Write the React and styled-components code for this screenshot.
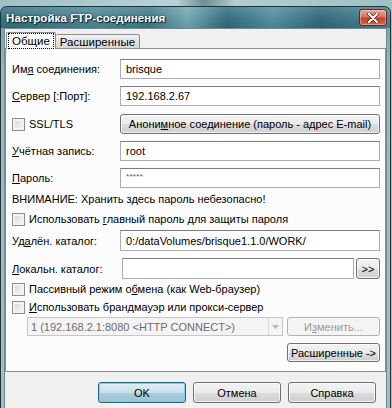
import React from 'react';
import styled, { createGlobalStyle } from 'styled-components';

const GlobalStyle = createGlobalStyle`
  html, body {
    margin: 0;
    padding: 0;
    background: #9fc0c5;
  }
  body {
    font-family: "Liberation Sans", Arial, sans-serif;
    font-size: 11px;
    color: #000;
  }
`

const Desktop = styled.div`
  width: 392px;
  height: 408px;
  padding-top: 6px;
  box-sizing: border-box;
  background: linear-gradient(90deg, #9fc0c5 0%, #b8d2d5 45%, #6d8f95 52%, #b3cdd0 60%, #9fc0c5 100%);
  overflow: hidden;
`

const Window = styled.div`
  width: 391px;
  box-sizing: border-box;
  border: 1px solid #1f3339;
  border-bottom: none;
  border-radius: 7px 7px 0 0;
  padding: 0 3px 3px;
  background: linear-gradient(180deg, #3d7b89 0px, #7fa4ac 22px, #9bb8be 60px, #a4bfc4 100%);
`

const TitleBar = styled.div`
  height: 21px;
  display: flex;
  align-items: center;
  justify-content: space-between;
  margin: 0 -3px;
  padding-left: 5px;
  padding-right: 3px;
  border-radius: 6px 6px 0 0;
  background:
    linear-gradient(180deg, rgba(255,255,255,0.18) 0%, rgba(255,255,255,0.05) 50%, rgba(0,0,0,0.05) 100%),
    linear-gradient(90deg, #2f6d7d 0%, #4a8594 25%, #3c7685 38%, #6ea3af 48%, #2d6878 58%, #4f8b99 70%, #2b6676 82%, #4a8391 100%);
`

const Title = styled.span`
  color: #fff;
  font-weight: bold;
  font-size: 11.5px;
  letter-spacing: 0.1px;
  text-shadow: 0 0 2px #0d2026, 1px 1px 1px #0d2026;
`

const CloseButton = styled.div`
  width: 26px;
  height: 15px;
  border: 1px solid #5a2a24;
  border-radius: 3px;
  display: flex;
  align-items: center;
  justify-content: center;
  background: linear-gradient(180deg, #e9a99b 0%, #d8715e 45%, #c0412b 55%, #d36a4d 100%);
  box-shadow: inset 0 0 0 1px rgba(255,255,255,0.35);
`

const Body = styled.div`
  background: #f0f0f0;
  border: 1px solid #6f8a90;
  padding: 3px 0 5px;
`

const TabRow = styled.div`
  display: flex;
  align-items: flex-end;
  padding-left: 1px;
  margin-bottom: -1px;
  position: relative;
  z-index: 1;
`

const Tab = styled.div`
  height: ${p => (p.$active ? '17px' : '15px')};
  box-sizing: border-box;
  padding: ${p => (p.$active ? '1px 2px 0' : '0 4px')};
  display: flex;
  align-items: ${p => (p.$active ? 'flex-start' : 'center')};
  border: 1px solid #898c95;
  border-bottom: ${p => (p.$active ? 'none' : '1px solid #898c95')};
  border-left: ${p => (p.$active ? '1px solid #898c95' : 'none')};
  background: ${p => (p.$active ? '#fcfcfc' : 'linear-gradient(180deg, #f2f2f2 0%, #e3e3e3 50%, #d5d5d5 100%)')};
  border-radius: 2px 2px 0 0;
  font-size: 11.5px;
`

const FocusText = styled.span`
  padding: 0 3px;
  line-height: 14px;
  outline: 1px dotted #000;
`

const Panel = styled.div`
  border: 1px solid #898c95;
  background: #fcfcfc;
  padding: 10px 5px 9px 6px;
  display: flex;
  flex-direction: column;
`

const Row = styled.div`
  display: flex;
  align-items: center;
  height: ${p => p.$h || 20}px;
  margin-top: ${p => p.$mt || 0}px;
  padding-left: ${p => p.$indent || 0}px;
  justify-content: ${p => (p.$end ? 'flex-end' : 'flex-start')};
  gap: ${p => p.$gap || 0}px;
`

const Label = styled.label`
  width: 108px;
  flex: none;
  display: flex;
  align-items: center;
  white-space: nowrap;
`

const Field = styled.div`
  flex: 1;
  height: 100%;
  box-sizing: border-box;
  border: 1px solid #abadb3;
  border-top-color: #7a7c82;
  background: #fff;
  padding: ${p => (p.$small ? '3px 5px 0' : '0 5px')};
  display: flex;
  align-items: ${p => (p.$small ? 'flex-start' : 'center')};
  white-space: nowrap;
  font-size: ${p => (p.$small ? '8px' : '11px')};
  color: ${p => (p.$small ? '#555' : '#000')};
  letter-spacing: ${p => (p.$small ? '0.3px' : '0')};
`

const Button = styled.div`
  height: 100%;
  box-sizing: border-box;
  width: ${p => (p.$w ? `${p.$w}px` : 'auto')};
  flex: ${p => (p.$grow ? 1 : 'none')};
  border: 1px solid ${p => (p.$disabled ? '#adb2b5' : '#707070')};
  border-radius: 3px;
  display: flex;
  align-items: center;
  justify-content: center;
  white-space: nowrap;
  color: ${p => (p.$disabled ? '#9a9a9a' : '#000')};
  background: ${p => (p.$disabled
    ? '#f4f4f4'
    : 'linear-gradient(180deg, #f2f2f2 0%, #ebebeb 50%, #dddddd 51%, #cfcfcf 100%)')};
  box-shadow: inset 0 0 0 1px ${p => (p.$disabled ? 'transparent' : 'rgba(255,255,255,0.7)')};
`

const DefaultButton = styled(Button)`
  border-color: #2c6279;
  background: linear-gradient(180deg, #e1eff5 0%, #c8e0ea 50%, #a9cddc 51%, #9cc4d5 100%);
  box-shadow: inset 0 0 0 1px #7fd0ef;
`

const Check = styled.span`
  width: 13px;
  height: 13px;
  box-sizing: border-box;
  flex: none;
  border: 1px solid #8f8f8f;
  background: linear-gradient(135deg, #d2d2d2 0%, #ececec 60%, #fafafa 100%);
  box-shadow: inset 0 0 0 2px #f4f4f4;
  margin-right: 4px;
`

const Warning = styled.div`
  height: 15px;
  display: flex;
  align-items: center;
  margin-top: 3px;
`

const Key = styled.u`
  text-decoration: underline;
  text-underline-offset: 1px;
`

const Select = styled.div`
  flex: 1;
  height: 100%;
  box-sizing: border-box;
  border: 1px solid #c4c6ca;
  background: #f4f4f4;
  display: flex;
  align-items: center;
  color: #6d6d6d;
  padding-left: 3px;
  margin-right: 4px;
`

const SelectText = styled.span`
  flex: 1;
  white-space: nowrap;
`

const DropArrow = styled.span`
  width: 14px;
  height: 100%;
  box-sizing: border-box;
  border-left: 1px solid #d6d8db;
  display: flex;
  align-items: center;
  justify-content: center;
  background: #f4f4f4;
`

const Footer = styled.div`
  display: flex;
  justify-content: flex-end;
  gap: 7px;
  height: 21px;
  margin-top: 10px;
  padding-right: 10px;
`

const CheckRow = ({ children, mt, h = 16 }) => (
  <Row $h={h} $mt={mt}>
    <Check />
    <span>{children}</span>
  </Row>
);

const App = () => (
  <>
    <GlobalStyle />
    <Desktop>
      <Window>
        <TitleBar>
          <Title>Настройка FTP-соединения</Title>
          <CloseButton>
            <svg width="12" height="10" viewBox="0 0 12 10">
              <path d="M2 1 L10 9 M10 1 L2 9" stroke="#5b1d12" strokeWidth="3.6" strokeLinecap="round" />
              <path d="M2 1 L10 9 M10 1 L2 9" stroke="#fff" strokeWidth="2.2" strokeLinecap="round" />
            </svg>
          </CloseButton>
        </TitleBar>
        <Body>
          <TabRow>
            <Tab $active><FocusText>Общие</FocusText></Tab>
            <Tab>Расширенные</Tab>
          </TabRow>
          <Panel>
            <Row>
              <Label>Им<Key>я</Key>&nbsp;соединения:</Label>
              <Field>brisque</Field>
            </Row>
            <Row $mt={7}>
              <Label><Key>С</Key>ервер [:Порт]:</Label>
              <Field>192.168.2.67</Field>
            </Row>
            <Row $mt={8}>
              <Label><Check />SSL/TLS</Label>
              <Button $grow>Анони<Key>м</Key>ное соединение (пароль - адрес E-mail)</Button>
            </Row>
            <Row $mt={7}>
              <Label><Key>У</Key>чётная запись:</Label>
              <Field>root</Field>
            </Row>
            <Row $mt={7}>
              <Label><Key>П</Key>ароль:</Label>
              <Field $small>*****</Field>
            </Row>
            <Warning>ВНИМАНИЕ: Хранить здесь пароль небезопасно!</Warning>
            <CheckRow mt={5}>Использовать <Key>г</Key>лавный пароль для защиты пароля</CheckRow>
            <Row $h={21} $mt={3}>
              <Label>Уд<Key>а</Key>лён. каталог:</Label>
              <Field>0:/dataVolumes/brisque1.1.0/WORK/</Field>
            </Row>
            <Row $h={21} $mt={7} $gap={2}>
              <Label><Key>Л</Key>окальн. каталог:</Label>
              <Field />
              <Button $w={24}>&gt;&gt;</Button>
            </Row>
            <CheckRow mt={2}>Пассивный режим о<Key>б</Key>мена (как Web-браузер)</CheckRow>
            <CheckRow mt={2}><Key>И</Key>спользовать брандмауэр или прокси-сервер</CheckRow>
            <Row $h={19} $mt={2} $indent={15}>
              <Select>
                <SelectText>1 (192.168.2.1:8080 &lt;HTTP CONNECT&gt;)</SelectText>
                <DropArrow>
                  <svg width="7" height="4" viewBox="0 0 7 4"><path d="M0 0 H7 L3.5 4 Z" fill="#b5b5b5" /></svg>
                </DropArrow>
              </Select>
              <Button $w={93} $disabled>И<Key>з</Key>менить...</Button>
            </Row>
            <Row $h={19} $mt={7} $end>
              <Button $w={93}>Расширенные -&gt;</Button>
            </Row>
          </Panel>
          <Footer>
            <DefaultButton $w={88}>OK</DefaultButton>
            <Button $w={88}>Отмена</Button>
            <Button $w={88}>Справка</Button>
          </Footer>
        </Body>
      </Window>
    </Desktop>
  </>
);

export default App;
